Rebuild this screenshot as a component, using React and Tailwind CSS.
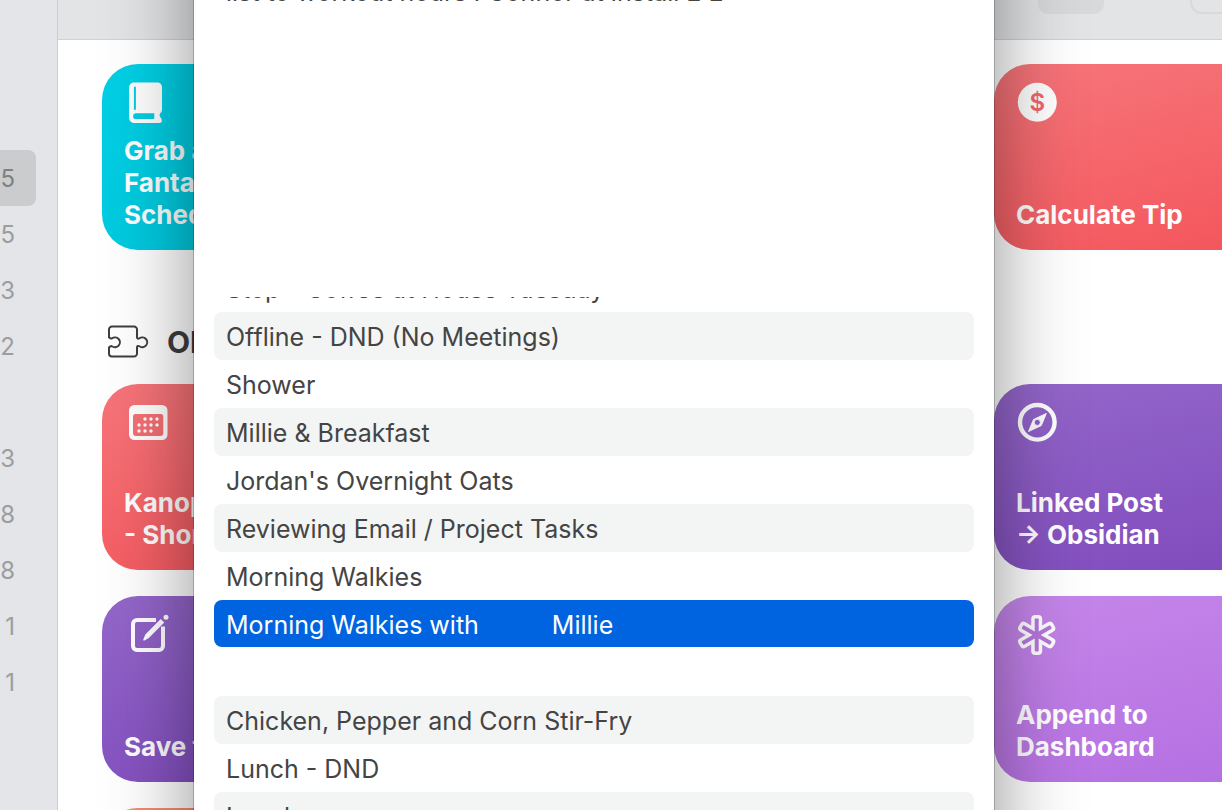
import React from 'react';

const counts = [
  { id: 'a', n: '5', selected: true },
  { id: 'b', n: '5' },
  { id: 'c', n: '3' },
  { id: 'd', n: '2' },
  { id: 'gap', n: '' },
  { id: 'e', n: '3' },
  { id: 'f', n: '8' },
  { id: 'g', n: '8' },
  { id: 'h', n: '1' },
  { id: 'i', n: '1' },
];

const events = [
  { parts: ['Stop - Coffee at House Tuesday'] },
  { parts: ['Offline - DND (No Meetings)'], striped: true },
  { parts: ['Shower'] },
  { parts: ['Millie & Breakfast'], striped: true },
  { parts: ["Jordan's Overnight Oats"] },
  { parts: ['Reviewing Email / Project Tasks'], striped: true },
  { parts: ['Morning Walkies'] },
  { parts: ['Morning Walkies with', 'Millie'], selected: true },
  { parts: [] },
  { parts: ['Chicken, Pepper and Corn Stir-Fry'], striped: true },
  { parts: ['Lunch - DND'] },
  { parts: ['Lunch'], striped: true },
];

function Icon({ children }) {
  return (
    <svg aria-hidden="true" viewBox="0 0 46 48" className="h-12 w-[46px] shrink-0" fill="none">
      {children}
    </svg>
  );
}

function BookIcon() {
  return (
    <Icon>
      <path
        fill="#fff"
        fillRule="evenodd"
        d="M10 4.500H33.500a4.500 4.500 0 0 1 4.500 4.500V31.500c0 1.500-.5 2.500-1.500 3.500-1.200 1.200-1.200 3 0 4.500l1 1.500c.8 1.500.3 4-1.500 4H10.500A5.500 5.500 0 0 1 5 39.500V9.500a5 5 0 0 1 5-5ZM10.900 8.500a1 1 0 0 0-1 1V31a1 1 0 0 0 2 0V9.500a1 1 0 0 0-1-1ZM12 35.300a2.900 2.900 0 0 0 0 5.800H30.300V35.300Z"
      />
    </Icon>
  );
}

function DollarIcon() {
  return (
    <Icon>
      <circle cx="21.300" cy="24.300" r="19.500" fill="#fff" />
      <text x="21.300" y="33" textAnchor="middle" className="fill-[#ee676c] font-['Inter'] text-[24px] font-semibold">
        $
      </text>
    </Icon>
  );
}

function CalendarIcon() {
  const dots = [
    [21, 21], [27, 21], [33, 21],
    [15, 27], [21, 27], [27, 27], [33, 27],
    [15, 33], [21, 33], [27, 33],
  ];
  return (
    <Icon>
      <path
        fill="#fff"
        fillRule="evenodd"
        d="M10.500 7H38a5.500 5.500 0 0 1 5.500 5.500V36.500A5.500 5.500 0 0 1 38 42H10.500A5.500 5.500 0 0 1 5 36.500V12.500A5.500 5.500 0 0 1 10.500 7ZM11.500 16A2.500 2.500 0 0 0 9 18.500V35a3 3 0 0 0 3 3H36.300a3 3 0 0 0 3-3V18.500A2.500 2.500 0 0 0 36.800 16Z"
      />
      {dots.map(([x, y]) => (
        <circle key={`${x}-${y}`} cx={x} cy={y} r="1.700" fill="#fff" />
      ))}
    </Icon>
  );
}

function CompassIcon() {
  return (
    <Icon>
      <circle cx="21.300" cy="24.300" r="17.300" stroke="#fff" strokeWidth="4.400" />
      <path
        fill="#fff"
        fillRule="evenodd"
        stroke="#fff"
        strokeWidth="1"
        strokeLinejoin="round"
        d="M30.300 15.500L17.500 21.500L12.500 33.500L25.300 27.500ZM21.300 21.300a3.100 3.100 0 1 1 0 6.200a3.100 3.100 0 1 1 0-6.200Z"
      />
    </Icon>
  );
}

function ComposeIcon() {
  return (
    <Icon>
      <path
        stroke="#fff"
        strokeWidth="4"
        d="M32 10H13a4 4 0 0 0-4 4V36a4 4 0 0 0 4 4H35a4 4 0 0 0 4-4V16.500"
      />
      <path
        fill="#fff"
        d="M36.700 8.900L40.300 12.500L24.800 28L20.500 30.400c-.9.400-1.500-.2-1.100-1.100L21.300 24.500Z"
      />
      <circle cx="42" cy="7.200" r="2.500" fill="#fff" />
    </Icon>
  );
}

function AsteriskIcon() {
  const angles = [0, 60, 120];
  return (
    <Icon>
      {angles.map((a) => (
        <rect key={a} x="15.200" y="5" width="11" height="40" rx="4" fill="#fff" transform={`rotate(${a} 20.700 25)`} />
      ))}
      {angles.map((a) => (
        <rect key={a} x="18.700" y="8.500" width="4" height="33" rx="1" fill="#b677df" transform={`rotate(${a} 20.700 25)`} />
      ))}
    </Icon>
  );
}

function PuzzleIcon() {
  return (
    <svg aria-hidden="true" viewBox="0 0 44 38" className="h-[38px] w-11 shrink-0" fill="none">
      <path
        stroke="#3f3f3f"
        strokeWidth="2"
        strokeLinejoin="round"
        d="M6 3.500H28a3 3 0 0 1 3 3V14.200c0 1.600 1.300 1.800 2.300 1.100a5 4.900 0 1 1 0 8c-1-.7-2.300-.5-2.300 1.100V30.500a3 3 0 0 1-3 3H6a3 3 0 0 1-3-3V24.400c1.200-1.200 2-1.600 3-1.100a5 4.900 0 1 0 0-8c-1 .5-1.800.100-3-1.100V6.500a3 3 0 0 1 3-3Z"
      />
    </svg>
  );
}

function Card({ icon, lines, color, column }) {
  return (
    <button
      type="button"
      className={`flex h-[186px] flex-col items-start justify-between rounded-[36px] bg-linear-165 px-[22px] pt-[14px] pb-[19px] text-left text-[26px] leading-8 font-bold text-white ${color} ${column}`}
    >
      {icon}
      <span className="flex flex-col whitespace-nowrap">
        {lines.map((line) => (
          <span key={line}>{line}</span>
        ))}
      </span>
    </button>
  );
}

const red = 'from-[#f6757a] to-[#f34f57]';
const purple = 'from-[#9467ca] to-[#7d46bb]';
const lilac = 'from-[#c587ea] to-[#b26be0]';
const cyan = 'from-[#00d0e5] to-[#00c6dc]';
const orange = 'from-[#f78b74] to-[#f56f5a]';
const grid = 'grid grid-cols-[repeat(3,420px)] gap-[26px]';

export default function App() {
  return (
    <div className="relative flex h-screen overflow-hidden bg-white font-['Inter','Liberation_Sans',sans-serif]">
      <nav aria-label="Folders" className="w-[58px] shrink-0 border-r border-[#cbccd0] bg-[#e4e5e8] pt-[150px] pr-[21px]">
        <ul>
          {counts.map((c) => (
            <li
              key={c.id}
              className={`flex h-14 items-center justify-end rounded-r-lg pt-[2px] pr-[21px] text-2xl ${
                c.selected ? 'bg-[#cbccce] text-[#808182]' : 'text-[#9c9d9f]'
              }`}
            >
              {c.n}
            </li>
          ))}
        </ul>
      </nav>

      <main className="min-w-0 flex-1 overflow-hidden">
        <header className="flex h-10 items-start justify-end gap-[86px] border-b border-[#d0d1d3] bg-[#e3e4e6]">
          <span className="h-[14px] w-[66px] rounded-b-[10px] bg-[#d8d9db]" />
          <span className="h-[14px] w-8 rounded-bl-[12px] border-b-2 border-l-2 border-[#d8d9db]" />
        </header>

        <section className="px-11 pt-6">
          <div className={grid}>
            <Card icon={<BookIcon />} lines={['Grab a', 'Fantastical', 'Schedule']} color={cyan} column="col-start-1" />
            <Card icon={<DollarIcon />} lines={['Calculate Tip']} color={red} column="col-start-3" />
          </div>

          <h2 className="flex h-[134px] items-center gap-[17px] pt-[50px] pl-1 text-[30px] font-bold text-[#3d3d3d]">
            <PuzzleIcon />
            Obsidian
          </h2>

          <div className={grid}>
            <Card icon={<CalendarIcon />} lines={['Kanopy', '- Shortcut']} color={red} column="col-start-1" />
            <Card icon={<CompassIcon />} lines={['Linked Post', '→ Obsidian']} color={purple} column="col-start-3" />
            <Card icon={<ComposeIcon />} lines={['Save to']} color={purple} column="col-start-1" />
            <Card icon={<AsteriskIcon />} lines={['Append to', 'Dashboard']} color={lilac} column="col-start-3" />
            <Card lines={[]} color={orange} column="col-start-1" />
          </div>
        </section>
      </main>

      <div className="absolute inset-x-0 -top-48 -bottom-48 flex justify-center pr-[34px]">
        <div
          role="dialog"
          aria-label="Events"
          className="flex w-full max-w-[800px] flex-col bg-white px-5 pt-40 text-[25px] text-[#444444] shadow-[0_0_0_1px_rgba(0,0,0,0.2),0_16px_80px_rgba(0,0,0,0.44)]"
        >
          <p className="h-12 pl-3 leading-[48px] whitespace-nowrap">list to workout hours I Connor at install E E</p>
          <div className="mt-[281px] min-h-0 flex-1 overflow-hidden">
            <ul className="-mt-[33px]">
              {events.map((e, i) => (
                <li key={i} className="h-12">
                  {e.parts.length > 0 && (
                    <button
                      type="button"
                      className={`flex w-full items-center gap-[73px] rounded-lg px-3 text-left whitespace-nowrap ${
                        e.selected
                          ? 'h-[47px] bg-[#0064e1] pt-1 text-white'
                          : e.striped
                            ? 'h-12 bg-[#f3f5f5] pt-[3px]'
                            : 'h-12 pt-[3px]'
                      }`}
                    >
                      {e.parts.map((p) => (
                        <span key={p}>{p}</span>
                      ))}
                    </button>
                  )}
                </li>
              ))}
            </ul>
          </div>
        </div>
      </div>
    </div>
  );
}
